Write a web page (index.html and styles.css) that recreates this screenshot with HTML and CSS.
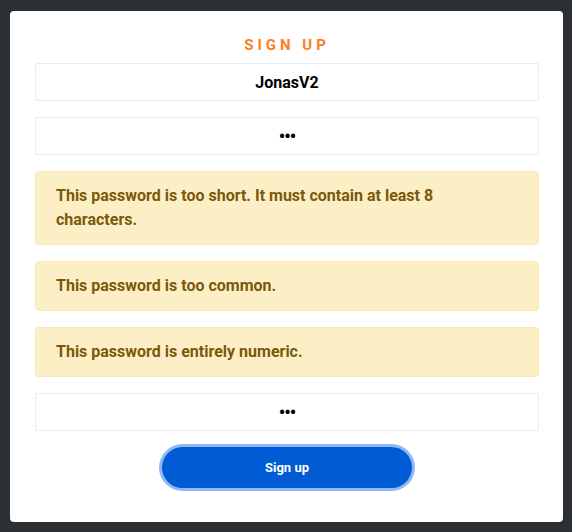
FILE: index.html
```html
<!DOCTYPE html>
<html>
<head>
<meta charset="utf-8">
<link rel="stylesheet" href="styles.css">
</head>
<body>
<div class="card">
  <h1 class="title">SIGN UP</h1>
  <div class="field">JonasV2</div>
  <div class="field dots">•••</div>
  <div class="alert">This password is too short. It must contain at least 8 characters.</div>
  <div class="alert">This password is too common.</div>
  <div class="alert">This password is entirely numeric.</div>
  <div class="field dots">•••</div>
  <div class="actions">
    <button class="btn">Sign up</button>
  </div>
</div>
</body>
</html>
```

FILE: styles.css
```css
html, body {
  margin: 0;
  padding: 0;
  background: #2c3035;
  font-family: Roboto, "Liberation Sans", sans-serif;
}
body {
  padding: 11px 9px 10px 10px;
  height: 532px;
  box-sizing: border-box;
}
.card {
  background: #ffffff;
  border-radius: 4px;
  height: 511px;
  box-sizing: border-box;
  padding: 0 24px 0 25px;
  display: flex;
  flex-direction: column;
}
.title {
  margin: 25px 0 0 0;
  height: 27px;
  text-align: center;
  color: #fd7e1e;
  font-size: 15px;
  line-height: 18px;
  font-weight: 700;
  letter-spacing: 4px;
}
.field {
  height: 38px;
  box-sizing: border-box;
  border: 1px solid #ebeaf4;
  border-radius: 2px;
  display: flex;
  align-items: center;
  justify-content: center;
  font-size: 16px;
  font-weight: 700;
  color: #000;
  margin-bottom: 16px;
}
.dots {
  font-size: 18px;
  letter-spacing: -1px;
}
.alert {
  background: #fdefc5;
  border: 1px solid #fce8a9;
  border-radius: 4px;
  padding: 12px 40px 12px 20px;
  font-size: 16px;
  line-height: 24px;
  font-weight: 700;
  color: #7b590a;
  margin-bottom: 16px;
}
.actions {
  display: flex;
  justify-content: center;
}
.btn {
  width: 250px;
  height: 41px;
  border: 0;
  border-radius: 21px;
  background: #015bd5;
  color: #fff;
  font-family: Roboto, "Liberation Sans", sans-serif;
  font-weight: 700;
  font-size: 13px;
  box-shadow: 0 0 0 3px #8bbaf6;
}
```
